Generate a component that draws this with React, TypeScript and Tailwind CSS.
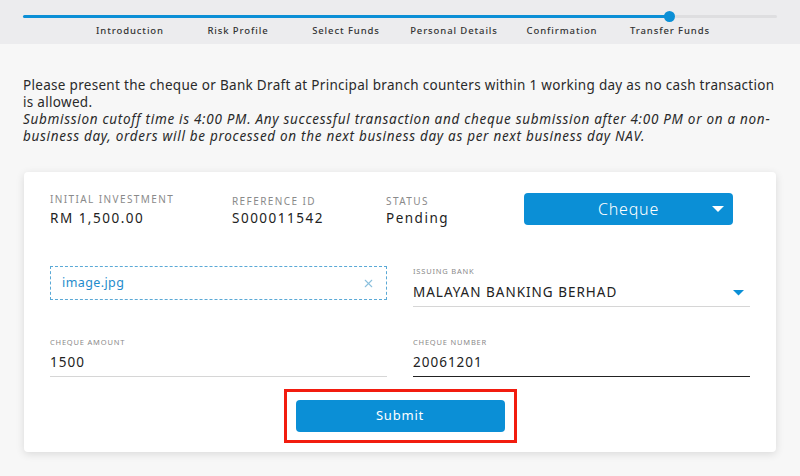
import { FiX } from 'react-icons/fi';

const steps = ['Introduction', 'Risk Profile', 'Select Funds', 'Personal Details', 'Confirmation', 'Transfer Funds'];

const Caret = ({ className, w = 12 }: { className: string; w?: number }) => (
  <svg width={w} height={w / 2 + 1} viewBox="0 0 12 7" className={className}>
    <path d="M0 0 L12 0 L6 6 Z" fill="currentColor" />
  </svg>
);

const Field = ({ label, value, line }: { label: string; value: string; line: string }) => (
  <div className="flex flex-col pt-[2px]">
    <span className="text-[7.5px] tracking-[0.8px] text-[#8a8a8a] leading-none">{label}</span>
    <span className={`mt-[7px] pb-[5px] border-b ${line} text-[13.5px] tracking-[1px] text-[#222] leading-[18px]`}>{value}</span>
  </div>
);

const App = () => {
  return (
    <div className="w-[800px] h-[476px] bg-[#f7f7f7] overflow-hidden font-['Noto_Sans',sans-serif] text-[#222]">
      <header className="h-[44px] bg-[#ececee] pt-[15px]">
        <div className="relative mx-[23px] h-[3px] rounded-full bg-[#dedee0]">
          <div className="h-[3px] w-[647px] rounded-full bg-[#0b8fd6]" />
          <div className="absolute left-[641px] top-[-4px] h-[11px] w-[11px] rounded-full bg-[#0b8fd6]" />
        </div>
        <ul className="mt-[6px] ml-[76px] grid grid-cols-[repeat(6,108px)]">
          {steps.map((step) => (
            <li key={step} className="text-center text-[9.5px] font-medium tracking-[0.9px] text-[#333] leading-[14px]">
              {step}
            </li>
          ))}
        </ul>
      </header>

      <section className="pl-[23px] pr-[20px] pt-[33px] text-[13.5px] leading-[17px] text-[#2a2a2a]">
        <p className="tracking-[0.3px]">Please present the cheque or Bank Draft at Principal branch counters within 1 working day as no cash transaction is allowed.</p>
        <p className="italic tracking-[0.7px]">
          Submission cutoff time is 4:00 PM. Any successful transaction and cheque submission after 4:00 PM or on a non-business day, orders will be processed on the next business day as per next business day NAV.
        </p>
      </section>

      <div className="mx-[24px] mt-[27px] h-[280px] rounded-[4px] bg-white px-[26px] pt-[21px] shadow-[0_2px_8px_rgba(0,0,0,0.12)]">
        <div className="flex items-start">
          <div className="w-[182px]">
            <div className="text-[10px] tracking-[1.4px] text-[#8a8a8a] leading-[12px]">INITIAL INVESTMENT</div>
            <div className="mt-[4px] text-[13.5px] tracking-[1.5px] leading-[18px]">RM 1,500.00</div>
          </div>
          <div className="w-[154px] pt-[2px]">
            <div className="text-[10px] tracking-[1.4px] text-[#8a8a8a] leading-[12px]">REFERENCE ID</div>
            <div className="mt-[2px] text-[13.5px] tracking-[1.5px] leading-[18px]">S000011542</div>
          </div>
          <div className="w-[138px] pt-[2px]">
            <div className="text-[10px] tracking-[1.4px] text-[#8a8a8a] leading-[12px]">STATUS</div>
            <div className="mt-[2px] text-[13.5px] tracking-[1.5px] leading-[18px]">Pending</div>
          </div>
          <button className="relative flex h-[32px] w-[209px] items-center justify-center rounded-[4px] bg-[#0b8fd6] text-[16px] font-light tracking-[0.8px] text-white">
            Cheque
            <Caret className="absolute right-[9px] top-[13px] text-white" />
          </button>
        </div>

        <div className="mt-[39px] grid grid-cols-[337px_337px] gap-x-[26px] gap-y-[30px]">
          <div className="flex h-[34px] items-center justify-between border border-dashed border-[#5aa9d6] px-[11px]">
            <span className="text-[12.5px] tracking-[0.4px] text-[#1e8ccc]">image.jpg</span>
            <FiX className="text-[#8cc0dd]" size={13} />
          </div>
          <div className="relative">
            <Field label="ISSUING BANK" value="MALAYAN BANKING BERHAD" line="border-[#d6d6d6]" />
            <Caret w={11} className="absolute right-[6px] top-[24px] text-[#0b8fd6]" />
          </div>
          <Field label="CHEQUE AMOUNT" value="1500" line="border-[#d6d6d6]" />
          <Field label="CHEQUE NUMBER" value="20061201" line="border-[#222]" />
        </div>

        <div className="mt-[12px] flex justify-center">
          <div className="border-[3px] border-[#f21c0f] px-[9px] py-[8px]">
            <button className="h-[32px] w-[209px] rounded-[4px] bg-[#0b8fd6] text-[13px] tracking-[0.8px] text-white">Submit</button>
          </div>
        </div>
      </div>
    </div>
  );
};

export default App;
